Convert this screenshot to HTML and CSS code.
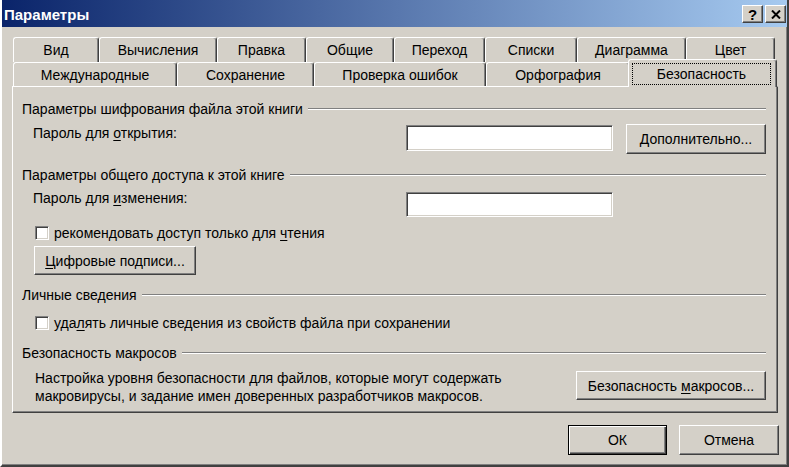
FILE: index.html
```html
<!DOCTYPE html>
<html lang="ru">
<head>
    <meta charset="UTF-8">
    <title>Параметры</title>
    <link rel="stylesheet" href="styles.css">
</head>
<body>
<div class="window">
    <div class="titlebar">
        <span class="title">Параметры</span>
        <div class="title-buttons">
            <span class="tbtn help">?</span>
            <span class="tbtn">
                <svg width="10" height="9" viewBox="0 0 10 9"><path d="M1 0.5 L9 8.5 M9 0.5 L1 8.5" stroke="#000" stroke-width="2"/></svg>
            </span>
        </div>
    </div>

    <div class="client">
        <div class="tabs">
            <div class="tab-row back">
                <div class="tab">Вид</div>
                <div class="tab">Вычисления</div>
                <div class="tab">Правка</div>
                <div class="tab">Общие</div>
                <div class="tab">Переход</div>
                <div class="tab">Списки</div>
                <div class="tab">Диаграмма</div>
                <div class="tab">Цвет</div>
            </div>
            <div class="tab-row front">
                <div class="tab">Международные</div>
                <div class="tab">Сохранение</div>
                <div class="tab">Проверка ошибок</div>
                <div class="tab">Орфография</div>
                <div class="tab active"><span class="focus">Безопасность</span></div>
            </div>
        </div>

        <div class="panel">
            <div class="group-title first"><span>Параметры шифрования файла этой книги</span><i class="rule"></i></div>
            <div class="field-row open">
                <label class="field-label">Пароль для <u>о</u>ткрытия:</label>
                <span class="textbox"></span>
                <span class="btn"><span><u>Д</u>ополнительно...</span></span>
            </div>

            <div class="group-title share"><span>Параметры общего доступа к этой книге</span><i class="rule"></i></div>
            <div class="field-row edit">
                <label class="field-label">Пароль для <u>и</u>зменения:</label>
                <span class="textbox"></span>
            </div>
            <div class="check-row readonly">
                <span class="checkbox"></span>
                <span>рекомендовать доступ только для <u>ч</u>тения</span>
            </div>
            <div class="btn sign"><span><u>Ц</u>ифровые подписи...</span></div>

            <div class="group-title personal"><span>Личные сведения</span><i class="rule"></i></div>
            <div class="check-row remove">
                <span class="checkbox"></span>
                <span>уда<u>л</u>ять личные сведения из свойств файла при сохранении</span>
            </div>

            <div class="group-title macro"><span>Безопасность макросов</span><i class="rule"></i></div>
            <div class="macro-row">
                <p class="macro-text">Настройка уровня безопасности для файлов, которые могут содержать<br>макровирусы, и задание имен доверенных разработчиков макросов.</p>
                <span class="btn macro-btn"><span>Безопасность <u>м</u>акросов...</span></span>
            </div>
        </div>

        <div class="footer">
            <span class="btn default">ОК</span>
            <span class="btn cancel">Отмена</span>
        </div>
    </div>
</div>
</body>
</html>
```

FILE: styles.css
```css
* {
    box-sizing: border-box;
}

body {
    margin: 0;
    font-family: 'Liberation Sans', Arial, sans-serif;
    font-size: 14px;
    color: #000;
    background-color: #d4d0c8;
}

u {
    text-decoration: underline;
    text-underline-offset: 2px;
}

.window {
    width: 789px;
    height: 467px;
    background-color: #d4d0c8;
    border-left: 2px solid #fff;
    border-right: 2px solid #404040;
    border-bottom: 2px solid #404040;
    box-shadow: inset -1px -1px #808080;
}

.titlebar {
    height: 27px;
    display: flex;
    align-items: center;
    justify-content: space-between;
    padding: 0 1px 0 2px;
    background: linear-gradient(to right, #0a246a, #a6caf0);
}

.title {
    color: #fff;
    font-weight: bold;
    font-size: 15px;
    margin-top: 2px;
}

.title-buttons {
    display: flex;
    gap: 2px;
    margin-top: 1px;
}

.tbtn {
    width: 21px;
    height: 18px;
    display: flex;
    align-items: center;
    justify-content: center;
    background-color: #d4d0c8;
    border-top: 1px solid #fff;
    border-left: 1px solid #fff;
    border-right: 1px solid #404040;
    border-bottom: 1px solid #404040;
    box-shadow: inset -1px -1px #808080;
}

.tbtn.help {
    font-weight: bold;
    font-size: 15px;
    line-height: 1;
}

.client {
    padding: 10px 9px 0 10px;
}

.tabs {
    margin-left: 1px;
}

.tab-row {
    display: grid;
    width: 762px;
}

.tab-row.back {
    height: 25px;
    grid-template-columns: 86px 118px 89px 88px 91px 92px 109px 89px;
}

.tab-row.front {
    height: 24px;
    grid-template-columns: 164px 137px 172px 144px 145px;
}

.tab {
    display: flex;
    align-items: center;
    justify-content: center;
    background-color: #d4d0c8;
    border-top: 1px solid #fff;
    border-left: 1px solid #fff;
    border-right: 1px solid #404040;
    border-radius: 3px 3px 0 0;
    box-shadow: inset -1px 0 #808080;
    white-space: nowrap;
}

.tab.active {
    position: relative;
    z-index: 1;
    margin: -3px -2px -1px -2px;
    padding: 3px 5px 2px 3px;
    align-items: stretch;
}

.focus {
    flex: 1;
    display: flex;
    align-items: center;
    justify-content: center;
    border: 1px dotted #000;
}

.panel {
    width: 766px;
    height: 327px;
    padding: 0 11px 0 9px;
    border-top: 1px solid #fff;
    border-left: 1px solid #fff;
    border-right: 1px solid #404040;
    border-bottom: 1px solid #404040;
    box-shadow: inset -1px -1px #808080;
}

.group-title {
    display: flex;
    align-items: center;
    height: 16px;
    line-height: 16px;
}

.rule {
    flex: 1;
    margin-left: 5px;
    border-top: 1px solid #808080;
    border-bottom: 1px solid #fff;
}

.group-title.first { margin-top: 14px; }
.group-title.share { margin-top: 13px; }
.group-title.personal { margin-top: 12px; }
.group-title.macro { margin-top: 14px; }

.field-row {
    display: grid;
    grid-template-columns: 1fr 207px 140px;
    column-gap: 13px;
    align-items: start;
    padding-left: 11px;
}

.field-row.open {
    height: 30px;
    margin-top: 7px;
}

.field-row.edit {
    height: 27px;
    margin-top: 7px;
}

.field-label {
    line-height: 16px;
    margin-top: 1px;
}

.field-row.edit .field-label {
    margin-top: 0;
}

.textbox {
    display: block;
    height: 26px;
    margin-top: 1px;
    background-color: #fff;
    border-top: 1px solid #808080;
    border-left: 1px solid #808080;
    border-right: 1px solid #fff;
    border-bottom: 1px solid #fff;
    box-shadow: inset 1px 1px #404040, inset -1px -1px #d4d0c8;
}

.field-row.edit .textbox {
    height: 25px;
    margin-top: 2px;
}

.btn {
    display: flex;
    align-items: center;
    justify-content: center;
    height: 30px;
    background-color: #d4d0c8;
    border-top: 1px solid #fff;
    border-left: 1px solid #fff;
    border-right: 1px solid #404040;
    border-bottom: 1px solid #404040;
    box-shadow: inset -1px -1px #808080;
    white-space: nowrap;
}

.check-row {
    display: flex;
    align-items: center;
    gap: 5px;
    height: 16px;
    padding-left: 13px;
}

.check-row.readonly { margin-top: 8px; }
.check-row.remove { margin-top: 12px; }

.checkbox {
    width: 14px;
    height: 14px;
    flex: none;
    background-color: #fff;
    border-top: 1px solid #808080;
    border-left: 1px solid #808080;
    border-right: 1px solid #fff;
    border-bottom: 1px solid #fff;
    box-shadow: inset 1px 1px #404040, inset -1px -1px #d4d0c8;
}

.btn.sign {
    width: 162px;
    height: 29px;
    margin: 5px 0 0 12px;
}

.macro-row {
    display: flex;
    justify-content: space-between;
    align-items: flex-start;
    margin-top: 8px;
    padding-left: 13px;
}

.macro-text {
    margin: 0;
    line-height: 18px;
}

.btn.macro-btn {
    width: 190px;
    height: 29px;
    margin-top: 2px;
}

.footer {
    display: flex;
    justify-content: flex-end;
    gap: 12px;
    margin-top: 12px;
    width: 767px;
}

.btn.default {
    width: 99px;
    height: 30px;
    border: 1px solid #000;
    box-shadow: inset 1px 1px #fff, inset -1px -1px #404040, inset -2px -2px #808080;
}

.btn.cancel {
    width: 100px;
    height: 30px;
}
```
